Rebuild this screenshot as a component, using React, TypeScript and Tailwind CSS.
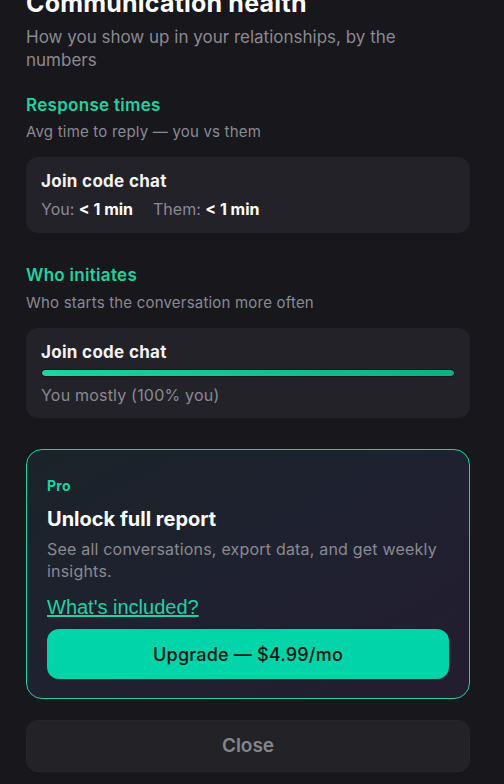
const stats = {
  response: { name: "Join code chat", you: "< 1 min", them: "< 1 min" },
  initiates: { name: "Join code chat", youPct: 100, label: "You mostly (100% you)" },
};

export default function App() {
  return (
    <div className="min-h-screen bg-[#18171c] pl-[26px] pr-[34px] pb-6 font-['Inter','Noto_Sans',sans-serif] text-white">
      {/* Header (scrolled slightly) */}
      <h2 className="-mt-[12px] text-[25px] font-bold leading-[30px] tracking-[0.2px] text-white">Communication health</h2>
      <p className="mt-[8px] max-w-[420px] text-[17px] leading-[23px] text-[#8a8a93]">
        How you show up in your relationships, by the numbers
      </p>

      {/* Response times */}
      <h3 className="mt-[21px] text-[17px] font-semibold leading-[24px] tracking-[0.3px] text-[#1ed3a2]">Response times</h3>
      <p className="mt-[5px] text-[15px] leading-[20px] tracking-[0.2px] text-[#8a8a93]">Avg time to reply — you vs them</p>
      <div className="mt-[15px] rounded-xl bg-[#222228] px-[15px] pt-[12px] pb-[13px]">
        <div className="text-[17px] font-bold leading-[24px] tracking-[0.3px] text-[#f2f2f4]">{stats.response.name}</div>
        <div className="mt-[5px] flex gap-5 text-[16px] leading-[22px] text-[#8a8a93]">
          <span>
            You: <span className="font-bold text-white">{stats.response.you}</span>
          </span>
          <span>
            Them: <span className="font-bold text-white">{stats.response.them}</span>
          </span>
        </div>
      </div>

      {/* Who initiates */}
      <h3 className="mt-[30px] text-[17px] font-semibold leading-[24px] tracking-[0.3px] text-[#1ed3a2]">Who initiates</h3>
      <p className="mt-[6px] text-[15px] leading-[20px] tracking-[0.2px] text-[#8a8a93]">Who starts the conversation more often</p>
      <div className="mt-[15px] rounded-xl bg-[#222228] px-[15px] pt-[12px] pb-[12px]">
        <div className="text-[17px] font-bold leading-[24px] tracking-[0.3px] text-[#f2f2f4]">{stats.initiates.name}</div>
        <div className="mt-[5px] h-[8px] w-full overflow-hidden rounded-full border border-[#15151a] bg-[#15151a]">
          <div
            className="h-full rounded-full bg-gradient-to-r from-[#1ed3a2] to-[#0fae84]"
            style={{ width: `${stats.initiates.youPct}%` }}
          />
        </div>
        <div className="mt-[7px] text-[16px] leading-[22px] tracking-[0.2px] text-[#8a8a93]">{stats.initiates.label}</div>
      </div>

      {/* Pro upsell */}
      <div className="mt-[31px] rounded-2xl border border-[#1ed3a2] bg-gradient-to-br from-[#1b2329] via-[#1f2130] to-[#231d2f] px-[20px] pt-[27px] pb-[19px]">
        <div className="text-[14px] font-bold leading-[18px] tracking-[0.3px] text-[#1ed3a2]">Pro</div>
        <div className="mt-[11px] text-[20px] font-bold leading-[26px] text-white">Unlock full report</div>
        <p className="mt-[6px] text-[16px] leading-[22px] tracking-[0.2px] text-[#8a8a93]">
          See all conversations, export data, and get weekly insights.
        </p>
        <a className="mt-[13px] block font-['Liberation_Sans',Arial,sans-serif] text-[20px] leading-[24px] text-[#1ed3a2] underline">
          What's included?
        </a>
        <button className="mt-[10px] h-[50px] w-full rounded-xl bg-[#00d4a8] text-[18px] font-medium tracking-[0.2px] text-[#0d1512]">
          Upgrade — $4.99/mo
        </button>
      </div>

      <button className="mt-[21px] h-[52px] w-full rounded-xl border border-[#26262c] bg-[#222227] text-[19px] font-semibold text-[#85858e]">
        Close
      </button>
    </div>
  );
}
